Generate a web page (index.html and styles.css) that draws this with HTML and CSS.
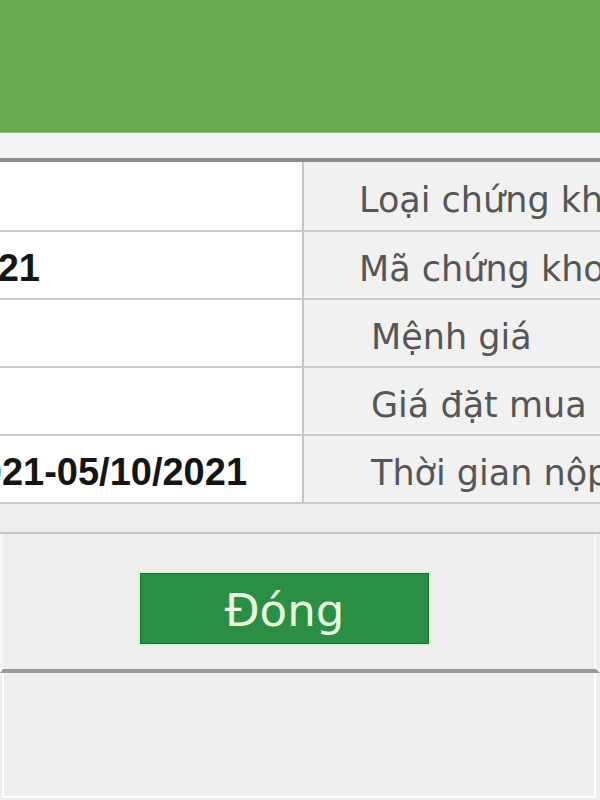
FILE: index.html
```html
<!DOCTYPE html>
<html lang="vi">
  <head>
    <meta charset="UTF-8" />
    <meta name="viewport" content="width=device-width, initial-scale=1.0" />
    <title>Thông tin đặt mua</title>
    <link rel="stylesheet" href="styles.css">
  </head>
  <body>
    <div class="header"></div>
    <div class="subbar"></div>

    <div class="detail">
      <table class="info-table">
        <tr>
          <td class="value"></td>
          <td class="label">Loại chứng khoán</td>
        </tr>
        <tr>
          <td class="value">BVB12021</td>
          <td class="label">Mã chứng khoán</td>
        </tr>
        <tr>
          <td class="value"></td>
          <td class="label label-indent">Mệnh giá</td>
        </tr>
        <tr>
          <td class="value"></td>
          <td class="label label-indent">Giá đặt mua</td>
        </tr>
        <tr>
          <td class="value">21/09/2021-05/10/2021</td>
          <td class="label label-indent">Thời gian nộp tiền</td>
        </tr>
      </table>
    </div>

    <div class="spacer"></div>

    <div class="actions">
      <button type="button" class="btn">Đóng</button>
    </div>

    <div class="lower"></div>
  </body>
</html>
```

FILE: styles.css
```css
*,
*::after,
*::before {
  margin: 0;
  padding: 0;
  box-sizing: border-box;
}

html {
  font-family: "DejaVu Sans", Verdana, Tahoma, sans-serif;
}

body {
  background: #eeeeee;
  overflow: hidden;
  height: 100vh;
}

.header {
  height: 133px;
  background: #6aa852;
  border-bottom: 1px solid #8cc078;
}

.subbar {
  height: 25px;
  background: #f4f4f4;
}

.detail {
  border-top: 4px solid #8d8d8d;
  overflow: hidden;
}

.info-table {
  border-collapse: collapse;
  margin-left: -146px;
  width: 900px;
}

.info-table td {
  height: 68px;
  padding-top: 7px;
  border-bottom: 2px solid #cbcbcb;
  vertical-align: middle;
  white-space: nowrap;
}

.info-table tr:first-child td {
  height: 69px;
}

.value {
  width: 449px;
  background: #ffffff;
  border-right: 2px solid #c4c4c4;
  font-family: "Liberation Sans", Arial, sans-serif;
  font-weight: bold;
  font-size: 38px;
  color: #151515;
}

.label {
  background: #f1f1f1;
  padding-left: 55px;
  font-size: 35px;
  color: #565656;
}

.label-indent {
  padding-left: 67px;
}

.spacer {
  height: 30px;
  background: #eeeeee;
  border-bottom: 2px solid #c6c6c6;
}

.actions {
  height: 139px;
  padding: 39px 0 0 137px;
  border-left: 3px solid #f7f7f7;
  border-right: 4px solid #eeeeee;
  box-shadow: inset -2px 0 0 #fafafa;
  border-bottom: 4px solid #9a9a9a;
}

.btn {
  width: 289px;
  height: 71px;
  padding-top: 4px;
  background: #2a8e44;
  border: 1px solid #1d6b31;
  outline: 2px solid #d4f7d0;
  color: #e8ffe2;
  font-family: "DejaVu Sans", Verdana, sans-serif;
  font-size: 45px;
  cursor: pointer;
}

.lower {
  height: 125px;
  margin: 0 4px 0 2px;
  background: #efefef;
  border-left: 2px solid #ffffff;
  border-right: 2px solid #ffffff;
  border-bottom: 2px solid #ffffff;
}
```
